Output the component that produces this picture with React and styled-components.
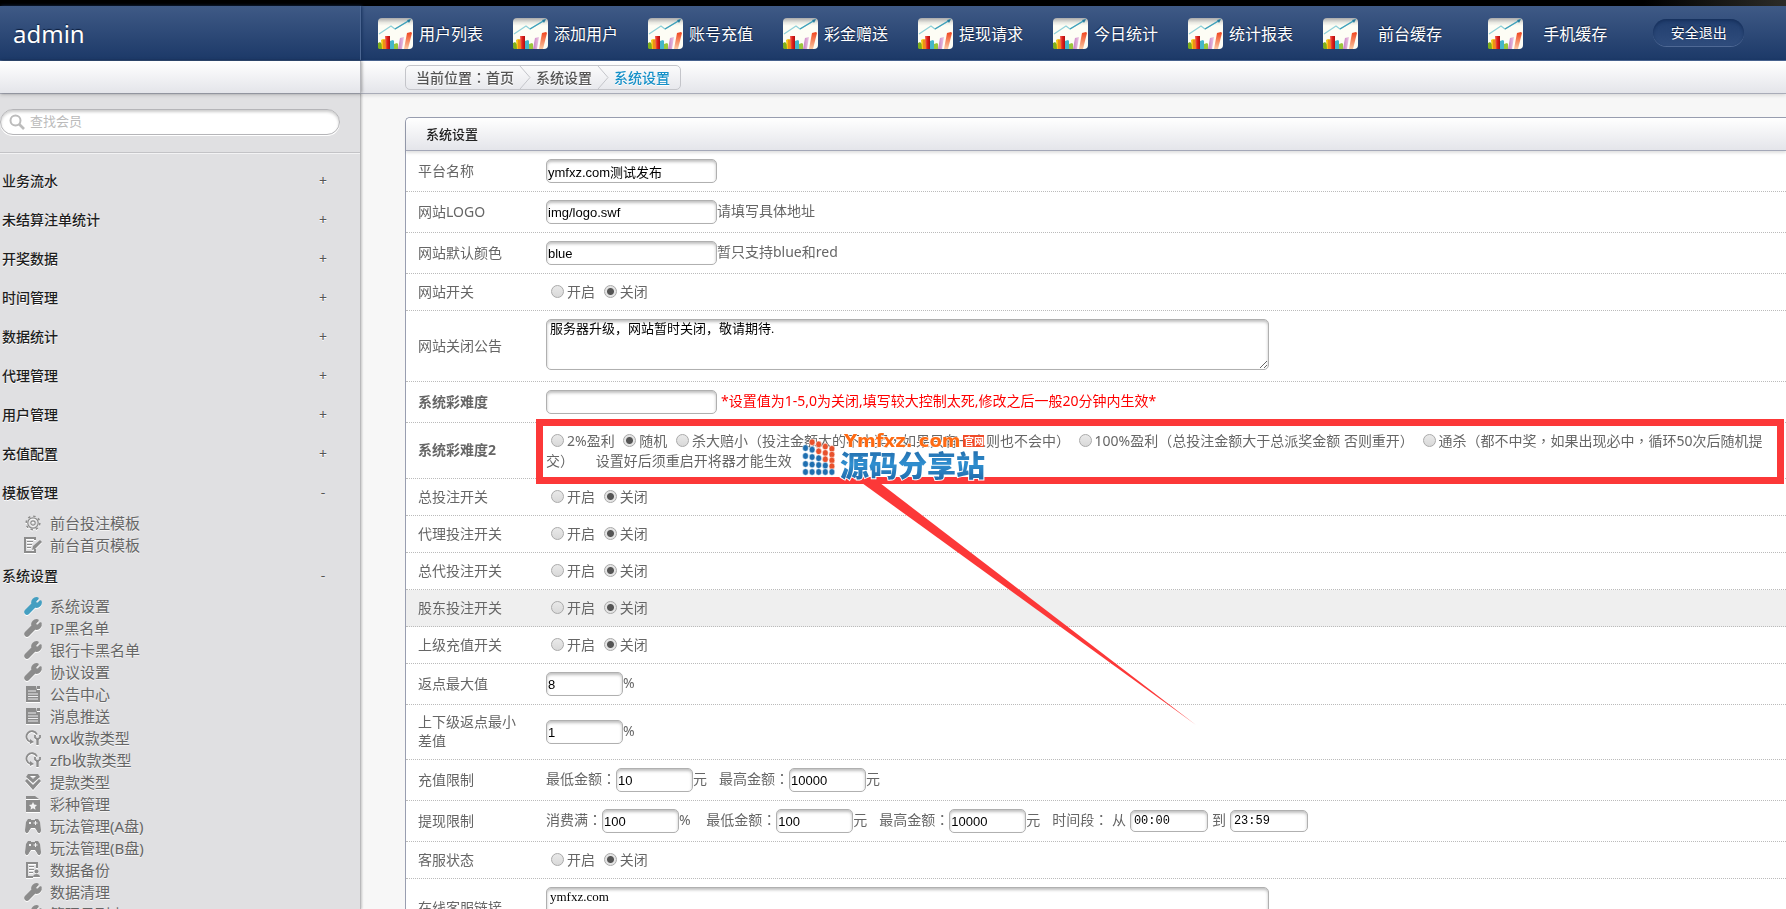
import React, { useState } from 'react';
import styled, { createGlobalStyle } from 'styled-components';
import { FaWrench } from 'react-icons/fa';

const GlobalStyle = createGlobalStyle`
  * {
    box-sizing: border-box;
  }

  body {
    margin: 0;
    background: #f7f7f7;
    color: #666;
    font-family: 'Noto Sans', 'Noto Sans CJK SC', sans-serif;
    font-size: 14px;
    line-height: 19px;
  }

  a {
    color: inherit;
    text-decoration: none;
  }
`;

const Shell = styled.div`
  display: flex;
  flex-direction: column;
  height: 100vh;
  overflow: hidden;
`;

const TopStrip = styled.div`
  flex: none;
  height: 6px;
  background: linear-gradient(90deg, #000 92%, #2c2c28 100%);
`;

const Header = styled.header`
  flex: none;
  display: flex;
  height: 55px;
  background: linear-gradient(#3f5a86, #1c3968);
  border-bottom: 1px solid #4a6694;
  color: #fff;
  text-shadow: 0 -1px 1px #0b1c3a;
`;

const UserName = styled.div`
  flex: none;
  width: 361px;
  padding: 0 13px;
  border-right: 1px solid #4c6793;
  box-shadow: 1px 0 3px #16305c;
  font-size: 24px;
  line-height: 56px;
`;

const Nav = styled.nav`
  flex: 1;
  display: flex;
  align-items: center;
  padding-left: 17px;
  white-space: nowrap;
`;

const NavLink = styled.a`
  display: flex;
  align-items: center;
  gap: ${props => (props.$wide ? '20px' : '6px')};
  margin-right: ${props => (props.$wide ? '46px' : '30px')};
  font-size: 16px;
`;

const NavText = styled.span`
  padding-top: 2px;
  line-height: 24px;
`;

const LogoutButton = styled.button`
  width: 91px;
  height: 27px;
  margin-bottom: 2px;
  padding: 0;
  border: none;
  border-radius: 14px;
  background: linear-gradient(#213e6e, #2f4c7c);
  box-shadow: inset 0 2px 3px #17315d, 0 1px 0 #4f6995;
  color: #fff;
  font: inherit;
  font-size: 14px;
  text-shadow: inherit;
  cursor: pointer;
`;

const SubBar = styled.div`
  flex: none;
  position: relative;
  display: flex;
  height: 33px;
  background: linear-gradient(#fff, #e4e5ea);
  border-bottom: 1px solid #a9acb8;
  box-shadow: 0 1px 4px rgba(0, 0, 0, 0.15);
`;

const SubBarSide = styled.div`
  flex: none;
  width: 361px;
  border-right: 1px solid #b4b5ba;
  box-shadow: 1px 0 3px rgba(0, 0, 0, 0.35);
`;

const Breadcrumb = styled.nav`
  display: flex;
  align-items: center;
  height: 25px;
  margin: 4px 0 0 44px;
  padding: 0 10px;
  border: 1px solid #c4c5ca;
  border-radius: 5px;
  color: #555;
  font-weight: 500;
  text-shadow: 0 1px 0 #fff;
  white-space: nowrap;
`;

const Crumb = styled.a`
  color: ${props => (props.$current ? '#1590c8' : '#555')};
`;

const CrumbArrow = styled.svg`
  width: 12px;
  height: 23px;
  margin: 0 5px;
  fill: none;
  stroke: #c4c5ca;
`;

const Body = styled.div`
  flex: 1;
  display: flex;
  min-height: 0;
`;

const Sidebar = styled.aside`
  flex: none;
  width: 361px;
  overflow-y: auto;
  scrollbar-width: none;
  background: #e0e0e2;
  border-right: 1px solid #b9b9bb;
  box-shadow: 1px 0 2px rgba(0, 0, 0, 0.2);
`;

const SearchArea = styled.div`
  padding: 15px 20px 17px 0;
  border-bottom: 1px solid #c3c3c6;
  box-shadow: 0 1px 0 #f3f3f4;
`;

const SearchBox = styled.label`
  display: flex;
  align-items: center;
  gap: 5px;
  height: 26px;
  padding: 0 8px;
  border: 1px solid #b5b5b8;
  border-radius: 13px;
  background: #fff;
  box-shadow: inset 0 2px 3px rgba(0, 0, 0, 0.2), 0 1px 0 #fff;
`;

const SearchInput = styled.input`
  flex: 1;
  min-width: 0;
  padding: 0 0 2px;
  border: none;
  outline: none;
  background: none;
  font: inherit;
  font-size: 13px;

  &::placeholder {
    color: #bbb;
    opacity: 1;
  }
`;

const Menu = styled.nav`
  padding-top: 8px;
`;

const MenuHeading = styled.button`
  display: flex;
  align-items: center;
  justify-content: space-between;
  width: 100%;
  height: 39px;
  padding: 0 33px 0 2px;
  border: none;
  background: none;
  color: #1d1d1d;
  font: inherit;
  font-weight: 500;
  text-shadow: 0 1px 0 #fff;
  cursor: pointer;
`;

const Sign = styled.span`
  width: 8px;
  color: #555;
  font-weight: 400;
  text-align: center;
`;

const SubList = styled.ul`
  margin: 0;
  padding: 0;
  list-style: none;
`;

const SubLink = styled.a`
  display: flex;
  align-items: center;
  gap: 8px;
  height: 22px;
  padding-left: 24px;
  font-size: 15px;
  text-shadow: 0 1px 0 #f4f4f4;

  svg {
    width: 18px;
    height: 16px;
    color: ${props => (props.$active ? '#459fc1' : '#8c8c8c')};
    filter: drop-shadow(0 1px 0 #fff);
  }
`;

const WrenchIcon = styled(FaWrench)`
  stroke-width: 56px;
  overflow: visible;
`;

const Main = styled.main`
  flex: 1;
  min-width: 0;
  overflow-y: auto;
  scrollbar-width: none;
  padding: 23px 0 40px 44px;
`;

const Panel = styled.form`
  background: #fff;
  border: 1px solid #999eb0;
  border-right: none;
  border-radius: 5px 0 0 5px;
`;

const PanelTitle = styled.h2`
  position: relative;
  height: 33px;
  margin: 0;
  padding-left: 20px;
  border-bottom: 1px solid #a4a8b8;
  border-radius: 5px 0 0 0;
  background: linear-gradient(#fff, #e4e5ea);
  box-shadow: 0 2px 3px rgba(0, 0, 0, 0.12);
  color: #222;
  font-size: 13px;
  font-weight: 500;
  line-height: 32px;
`;

const Row = styled.div`
  position: relative;
  display: grid;
  grid-template-columns: 128px 1fr;
  align-items: center;
  min-height: ${props => (props.$tall ? '56px' : '37px')};
  border-bottom: 1px dotted #bbb;
  background: ${props => (props.$active ? '#efefef' : 'transparent')};
`;

const RowLabel = styled.label`
  padding: 7px 12px 9px;
  font-weight: ${props => (props.$strong ? 700 : 400)};
`;

const Field = styled.div`
  display: flex;
  align-items: center;
  flex-wrap: wrap;
  padding: 8px 12px;
`;

const FieldText = styled.span`
  padding-bottom: 3px;
`;

const FieldLabel = styled.label`
  display: flex;
  align-items: center;
`;

const Choices = styled.div`
  padding: 8px 12px;
`;

const Radio = styled.input`
  appearance: none;
  width: 13px;
  height: 13px;
  margin: 0 3px 4px 5px;
  border: 1px solid #a9a9a9;
  border-radius: 50%;
  background: linear-gradient(#e9e9e9, #d9d9d9);
  vertical-align: middle;

  &:checked {
    background: radial-gradient(circle, #555 3px, #e4e4e4 4px);
  }
`;

const TextInput = styled.input`
  width: ${props => (props.$short ? '77px' : '171px')};
  height: 24px;
  padding: 0 1px;
  border: 1px solid #b0b0b0;
  border-radius: 5px;
  outline: none;
  background: #fff;
  box-shadow: inset 0 2px 3px rgba(0, 0, 0, 0.25);
  color: #000;
  font-family: 'Liberation Sans', 'Noto Sans CJK SC', sans-serif;
  font-size: 13px;
`;

const TimeInput = styled(TextInput)`
  width: 78px;
  height: 22px;
  margin: 0 4px;
  padding-left: 3px;
  font-family: 'Liberation Mono', monospace;
  font-size: 12px;
`;

const TextArea = styled.textarea`
  display: block;
  width: 723px;
  max-width: 100%;
  height: ${props => (props.$low ? '39px' : '51px')};
  margin-bottom: 3px;
  padding: 0 3px;
  border: 1px solid #b0b0b0;
  border-radius: 5px;
  outline: none;
  box-shadow: inset 0 2px 3px rgba(0, 0, 0, 0.25);
  color: #000;
  font-family: 'Liberation Serif', 'Noto Sans CJK SC', serif;
  font-size: 13px;
  line-height: 18px;
`;

const Group = styled.span`
  display: flex;
  align-items: center;
  margin-right: 12px;
`;

const Warning = styled(FieldText)`
  margin-left: 4px;
  color: #f00;
`;

// full-width colon and comma sit in the middle of their cell
const Punct = styled.span`
  font-family: 'Noto Sans CJK TC', sans-serif;
`;

const Highlight = styled.div`
  position: absolute;
  top: -4px;
  right: 2px;
  bottom: -6px;
  left: 130px;
  border: 7px solid #fc3838;
  pointer-events: none;
`;

const Pointer = styled.svg`
  position: absolute;
  top: 60px;
  left: 456px;
  z-index: 1;
  width: 334px;
  height: 242px;
  pointer-events: none;
`;

const Watermark = styled.svg`
  position: absolute;
  top: 4px;
  left: 394px;
  z-index: 2;
  width: 190px;
  height: 56px;
  pointer-events: none;
`;

const ChartIcon = () => (
  <svg width="35" height="31" viewBox="0 0 35 31">
    <defs>
      <linearGradient id="paper" x2="0" y2="1">
        <stop offset="0" stopColor="#aaa" />
        <stop offset=".15" stopColor="#e9e9e2" />
        <stop offset=".25" stopColor="#fdfdf5" />
      </linearGradient>
      <linearGradient id="redBar" x2="1"><stop stopColor="#f2695a" /><stop offset=".5" stopColor="#e0201a" /><stop offset="1" stopColor="#a80f10" /></linearGradient>
      <linearGradient id="orangeBar" x2="0" y2="1"><stop stopColor="#f0441e" /><stop offset="1" stopColor="#fbc8a0" /></linearGradient>
      <linearGradient id="pinkBar" x2="1"><stop stopColor="#c37cc0" /><stop offset="1" stopColor="#ecc4e4" /></linearGradient>
    </defs>
    <rect width="35" height="31" rx="4" fill="url(#paper)" />
    <path d="M1 16 4 14 13 8l4 3L32 2" fill="none" stroke="#8fd0d8" strokeWidth="1.2" />
    <path d="M17 11 32 2" fill="none" stroke="#3f9fb9" strokeWidth="1.2" />
    <path d="m29 2 4-1-2 4z" fill="#267d9d" />
    <path d="M0 25l2-1 2 2v5H1l-1-1z" fill="#7fae1d" />
    <path d="M3 22l2-1 3 1v9H4z" fill="#f4c813" />
    <path d="M5 22l3-1v10H5z" fill="#ee8e18" />
    <path d="M7 18h5v13H8z" fill="url(#redBar)" />
    <path d="M12 23l3-1 1 1v8h-4z" fill="#45b5cb" />
    <path d="M16 26l3-1 1 1v5h-4z" fill="#9ac83b" />
    <path d="M22 20l4-1-2 12h-4z" fill="url(#pinkBar)" />
    <path d="M29 15l4-1 1 1-4 16h-4z" fill="url(#orangeBar)" />
  </svg>
);

const SearchIcon = () => (
  <svg width="16" height="16" viewBox="0 0 16 16" fill="none" stroke="#bcbcbc" strokeWidth="2">
    <circle cx="6.5" cy="6.5" r="5" />
    <path d="m10 10 5 5" strokeWidth="2.6" />
  </svg>
);

const GearIcon = () => (
  <svg viewBox="0 0 16 16" fill="none" stroke="currentColor">
    <circle cx="8" cy="8" r="5.2" strokeWidth="1.3" />
    <circle cx="8" cy="8" r="2.2" strokeWidth="1.2" />
    <circle cx="8" cy="8" r="6.8" strokeWidth="1.6" strokeDasharray="2.4 2.94" />
  </svg>
);

const EditIcon = () => (
  <svg viewBox="0 0 18 16" fill="currentColor">
    <path d="M0 0h12v3h-2V2H2v12h8v-2h2v4H0z" />
    <path d="M3 4h6v1H3zM3 7h5v1H3zM3 10h4v1H3z" />
    <path d="m8 13 1-4 7-6 2 2-7 7z" />
  </svg>
);

const PageIcon = () => (
  <svg viewBox="0 0 16 16">
    <path d="M1 0h10l1 4h3v12H1z" fill="currentColor" />
    <path d="M12 0h3v3h-3z" fill="currentColor" />
    <path d="M3 5h8M3 8h10M3 10.500h10M3 13h10" stroke="#ececee" />
  </svg>
);

const PayIcon = () => (
  <svg viewBox="0 0 16 16" fill="none" stroke="currentColor">
    <path d="M12 4.500A5.500 5.500 0 1 0 5.500 12" strokeWidth="1.8" />
    <path d="m5 9 4 3-4 2z" fill="currentColor" stroke="none" />
    <path d="M12.500 15V9" strokeWidth="2.4" />
    <path d="M10 5v2.500l2.500 2L15 7.500V5" strokeWidth="1.8" />
  </svg>
);

const LayersIcon = () => (
  <svg viewBox="0 0 16 16" fill="currentColor">
    <path d="M3 0h10l2 3-7 6-7-6zm2 2 3 3 3-3z" fillRule="evenodd" />
    <path d="m0 7 2-2 6 6 6-6 2 2-8 9z" />
  </svg>
);

const LotteryIcon = () => (
  <svg viewBox="0 0 16 16">
    <path d="M1 0h9l4 3H1zM1 4h14v12H1z" fill="currentColor" />
    <path d="m8 6 1.200 2.600 2.800.300-2 2 .500 2.800L8 12.300l-2.500 1.400.500-2.800-2-2 2.800-.300z" fill="#f1f1f2" />
  </svg>
);

const GamepadIcon = () => (
  <svg viewBox="0 0 16 16">
    <path d="M3 1h3v1h4V1h3l2 3 1 8c0 4-3 4-4 1l-2-3H6l-2 3c-1 3-4 3-4-1l1-8z" fill="currentColor" />
    <path d="M4 4h2v2H4z" fill="#f1f1f2" />
    <path d="M10.500 3v4M8.500 5h4" stroke="#f1f1f2" />
  </svg>
);

const BackupIcon = () => (
  <svg viewBox="0 0 16 16" fill="currentColor">
    <path d="M1 0h12v6h-2V2H3v12h5v2H1z" />
    <path d="M4 4h5v1H4zM4 7h5v1H4zM4 10h4v1H4z" />
    <circle cx="11.500" cy="9.500" r="2" />
    <path d="M8 15c0-4 7-4 7 0z" />
  </svg>
);

const navItems = ['用户列表', '添加用户', '账号充值', '彩金赠送', '提现请求', '今日统计', '统计报表'];
const cacheItems = ['前台缓存', '手机缓存'];

const menu = [
  { title: '业务流水' },
  { title: '未结算注单统计' },
  { title: '开奖数据' },
  { title: '时间管理' },
  { title: '数据统计' },
  { title: '代理管理' },
  { title: '用户管理' },
  { title: '充值配置' },
  {
    title: '模板管理',
    items: [
      { text: '前台投注模板', icon: GearIcon },
      { text: '前台首页模板', icon: EditIcon },
    ],
  },
  {
    title: '系统设置',
    items: [
      { text: '系统设置', icon: WrenchIcon, active: true },
      { text: 'IP黑名单', icon: WrenchIcon },
      { text: '银行卡黑名单', icon: WrenchIcon },
      { text: '协议设置', icon: WrenchIcon },
      { text: '公告中心', icon: PageIcon },
      { text: '消息推送', icon: PageIcon },
      { text: 'wx收款类型', icon: PayIcon },
      { text: 'zfb收款类型', icon: PayIcon },
      { text: '提款类型', icon: LayersIcon },
      { text: '彩种管理', icon: LotteryIcon },
      { text: '玩法管理(A盘)', icon: GamepadIcon },
      { text: '玩法管理(B盘)', icon: GamepadIcon },
      { text: '数据备份', icon: BackupIcon },
      { text: '数据清理', icon: WrenchIcon },
      { text: '管理员列表', icon: WrenchIcon },
    ],
  },
];

const difficulty = [
  '2%盈利',
  '随机',
  '杀大赔小（投注金额大的不中奖，如果只有一人则也不会中）',
  '100%盈利（总投注金额大于总派奖金额 否则重开）',
  '通杀（都不中奖，如果出现必中，循环50次后随机提交）',
];

// column, row of the dots in the site mark
const dots = [0, 1, 2, 3, 4].flatMap(r => [0, 1, 2, 3, 4].map(c => [c, r])).slice(1);

const isRedDot = (c, r) => r === 0 || c > r;

const zh = text =>
  text.split(/([：，])/).map((part, i) => (i % 2 ? <Punct key={i}>{part}</Punct> : part));

const RadioRow = ({ label, name, active }) => (
  <Row $active={active} role="radiogroup" aria-label={label}>
    <RowLabel as="span">{label}</RowLabel>
    <Choices>
      <label><Radio type="radio" name={name} value="1" />开启</label>{' '}
      <label><Radio type="radio" name={name} value="0" defaultChecked />关闭</label>
    </Choices>
  </Row>
);

const InputRow = ({ label, name, value, hint, short }) => (
  <Row>
    <RowLabel htmlFor={name}>{label}</RowLabel>
    <Field>
      <TextInput id={name} $short={short} defaultValue={value} />
      {hint && <FieldText>{hint}</FieldText>}
    </Field>
  </Row>
);

const Amount = ({ label, value, unit }) => (
  <Group>
    <FieldLabel>
      <FieldText>{zh(label)}</FieldText>
      <TextInput $short defaultValue={value} />
    </FieldLabel>
    <FieldText>{unit}</FieldText>
  </Group>
);

const SideMenu = () => {
  const [open, setOpen] = useState({ 模板管理: true, 系统设置: true });

  const toggle = title => setOpen({ ...open, [title]: !open[title] });

  return (
    <Menu>
      {menu.map(section => (
        <React.Fragment key={section.title}>
          <MenuHeading type="button" onClick={() => toggle(section.title)}>
            {section.title}
            <Sign>{open[section.title] ? '-' : '+'}</Sign>
          </MenuHeading>
          {open[section.title] && section.items && (
            <SubList>
              {section.items.map(({ text, icon: Icon, active }) => (
                <li key={text}>
                  <SubLink href="#" $active={active}>
                    <Icon />
                    {text}
                  </SubLink>
                </li>
              ))}
            </SubList>
          )}
        </React.Fragment>
      ))}
    </Menu>
  );
};

const SiteMark = () => (
  <Watermark viewBox="0 0 190 56">
    <defs>
      <linearGradient id="markBlue" x2="0" y2="1">
        <stop offset="0" stopColor="#1d5b98" />
        <stop offset=".5" stopColor="#2f8fd0" />
        <stop offset="1" stopColor="#1c5f9f" />
      </linearGradient>
    </defs>
    {dots.map(([c, r]) => {
      const top = 13 + c * 2.2;
      return (
        <ellipse
          key={`${c}-${r}`}
          cx={5.5 + c * 6.6}
          cy={top + ((45 - top) * r) / 4}
          rx="2.9"
          ry="3.3"
          fill={isRedDot(c, r) ? '#e8512c' : '#1f6fb0'}
          stroke="#fff"
          strokeWidth=".5"
        />
      );
    })}
    <text x="40" y="50" fontSize="29" fontWeight="900" fontFamily="'Noto Sans CJK SC', sans-serif" fill="url(#markBlue)" stroke="#fff" strokeWidth="2" paintOrder="stroke">源码分享站</text>
    <text x="44" y="20" fontSize="18" fontWeight="700" fontFamily="'DejaVu Sans', sans-serif" fill="#ff6a13" stroke="#fff" strokeWidth="1" paintOrder="stroke">Ymfxz. com</text>
    <rect x="163" y="8" width="21" height="12" fill="#f04a28" />
    <text x="164" y="18" fontSize="10" fontWeight="700" fontFamily="'Noto Sans CJK SC', sans-serif" fill="#fff">官网</text>
  </Watermark>
);

const App = () => {
  return (
    <>
      <GlobalStyle />
      <Shell>
        <TopStrip />
        <Header>
          <UserName>admin</UserName>
          <Nav>
            {navItems.map(text => (
              <NavLink key={text} href="#">
                <ChartIcon />
                <NavText>{text}</NavText>
              </NavLink>
            ))}
            {cacheItems.map(text => (
              <NavLink key={text} href="#" $wide>
                <ChartIcon />
                <NavText>{text}</NavText>
              </NavLink>
            ))}
            <LogoutButton type="button">安全退出</LogoutButton>
          </Nav>
        </Header>
        <SubBar>
          <SubBarSide />
          <Breadcrumb>
            <span>{zh('当前位置：')}</span>
            <Crumb href="#">首页</Crumb>
            <CrumbArrow viewBox="0 0 12 23"><path d="M1 0l10 11.500L1 23" /></CrumbArrow>
            <Crumb href="#">系统设置</Crumb>
            <CrumbArrow viewBox="0 0 12 23"><path d="M1 0l10 11.500L1 23" /></CrumbArrow>
            <Crumb href="#" $current>系统设置</Crumb>
          </Breadcrumb>
        </SubBar>
        <Body>
          <Sidebar>
            <SearchArea>
              <SearchBox>
                <SearchIcon />
                <SearchInput placeholder="查找会员" aria-label="查找会员" />
              </SearchBox>
            </SearchArea>
            <SideMenu />
          </Sidebar>
          <Main>
            <Panel>
              <PanelTitle>系统设置</PanelTitle>
              <InputRow label="平台名称" name="webName" value="ymfxz.com测试发布" />
              <InputRow label="网站LOGO" name="webLogo" value="img/logo.swf" hint="请填写具体地址" />
              <InputRow label="网站默认颜色" name="webColor" value="blue" hint="暂只支持blue和red" />
              <RadioRow label="网站开关" name="switchWeb" />
              <Row>
                <RowLabel htmlFor="closeNotice">网站关闭公告</RowLabel>
                <Field>
                  <TextArea id="closeNotice" defaultValue="服务器升级，网站暂时关闭，敬请期待." />
                </Field>
              </Row>
              <Row>
                <RowLabel htmlFor="level" $strong>系统彩难度</RowLabel>
                <Field>
                  <TextInput id="level" />
                  <Warning>*设置值为1-5,0为关闭,填写较大控制太死,修改之后一般20分钟内生效*</Warning>
                </Field>
              </Row>
              <Row $tall role="radiogroup" aria-label="系统彩难度2">
                <RowLabel as="span" $strong>系统彩难度2</RowLabel>
                <Choices>
                  {difficulty.map((text, i) => (
                    <React.Fragment key={text}>
                      <label>
                        <Radio type="radio" name="level2" value={i} defaultChecked={i === 1} />
                        {zh(text)}
                      </label>{' '}
                    </React.Fragment>
                  ))}
                  {'\u00a0\u00a0\u00a0\u00a0\u00a0'}设置好后须重启开将器才能生效
                </Choices>
                <Highlight />
                <Pointer viewBox="0 0 334 242">
                  <path d="M0 0h18L334 242z" fill="#fc3838" />
                </Pointer>
                <SiteMark />
              </Row>
              <RadioRow label="总投注开关" name="switchBuy" />
              <RadioRow label="代理投注开关" name="switchDLBuy" />
              <RadioRow label="总代投注开关" name="switchZDLBuy" />
              <RadioRow label="股东投注开关" name="switchGDBuy" active />
              <RadioRow label="上级充值开关" name="switchRecharge" />
              <InputRow label="返点最大值" name="fanDianMax" value="8" hint="%" short />
              <InputRow label="上下级返点最小差值" name="fanDianDiff" value="1" hint="%" short />
              <Row>
                <RowLabel as="span">充值限制</RowLabel>
                <Field>
                  <Amount label="最低金额：" value="10" unit="元" />
                  <Amount label="最高金额：" value="10000" unit="元" />
                </Field>
              </Row>
              <Row>
                <RowLabel as="span">提现限制</RowLabel>
                <Field>
                  <Amount label="消费满：" value="100" unit={'%\u00a0'} />
                  <Amount label="最低金额：" value="100" unit="元" />
                  <Amount label="最高金额：" value="10000" unit="元" />
                  <FieldText>{zh('时间段：')}&nbsp;</FieldText>
                  <FieldLabel>
                    <FieldText>从</FieldText>
                    <TimeInput defaultValue="00:00" />
                  </FieldLabel>
                  <FieldLabel>
                    <FieldText>到</FieldText>
                    <TimeInput defaultValue="23:59" />
                  </FieldLabel>
                </Field>
              </Row>
              <RadioRow label="客服状态" name="kefuStatus" />
              <Row>
                <RowLabel htmlFor="kefuLink">在线客服链接</RowLabel>
                <Field>
                  <TextArea id="kefuLink" $low defaultValue="ymfxz.com" />
                </Field>
              </Row>
            </Panel>
          </Main>
        </Body>
      </Shell>
    </>
  );
};

export default App;
